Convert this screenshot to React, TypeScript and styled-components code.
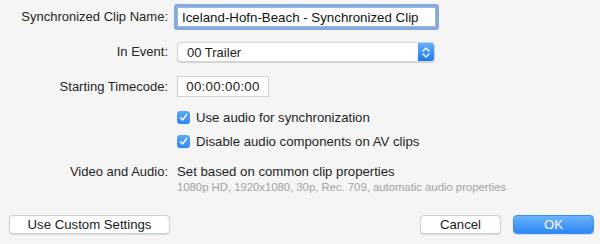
import React from 'react';
import styled, { createGlobalStyle } from 'styled-components';

const GlobalStyle = createGlobalStyle`
  html, body {
    margin: 0;
    padding: 0;
    background: #f5f5f5;
  }
  body {
    font-family: "Liberation Sans", Arial, sans-serif;
    font-size: 13px;
    color: #222;
    -webkit-font-smoothing: antialiased;
  }
`;

const Sheet = styled.div`
  width: 600px;
  height: 244px;
  box-sizing: border-box;
  padding-top: 7px;
  display: flex;
  flex-direction: column;
  background: #f5f5f5;
`;

const Row = styled.div<{ $top: number; $height: number }>`
  display: grid;
  grid-template-columns: 168px 1fr;
  column-gap: 9px;
  align-items: center;
  margin-top: ${(p) => p.$top}px;
  height: ${(p) => p.$height}px;
`;

const Label = styled.label<{ $top?: boolean }>`
  text-align: right;
  white-space: nowrap;
  color: #262626;
  align-self: ${(p) => (p.$top ? 'start' : 'center')};
  line-height: 16px;
`;

const TextField = styled.div`
  width: 259px;
  height: 20px;
  box-sizing: border-box;
  border: 1px solid #9bb6dc;
  background: #fff;
  box-shadow: 0 0 0 3px #86a9dc;
  border-radius: 1px;
  padding: 0 4px;
  display: flex;
  align-items: center;
  font-size: 13.3px;
  color: #111;
`;

const Popup = styled.div`
  width: 258px;
  height: 20px;
  box-sizing: border-box;
  display: flex;
  background: #fff;
  border: 1px solid #d4d4d4;
  border-radius: 4px;
  box-shadow: 0 0.5px 1px rgba(0, 0, 0, 0.15);
  overflow: hidden;
`;

const PopupValue = styled.div`
  flex: 1;
  display: flex;
  align-items: center;
  padding-left: 9px;
  color: #1a1a1a;
`;

const PopupArrows = styled.div`
  width: 16px;
  display: flex;
  align-items: center;
  justify-content: center;
  background: linear-gradient(#63aefc, #1c79f3);
`;

const Timecode = styled.div`
  width: 92px;
  height: 21px;
  box-sizing: border-box;
  border: 1px solid #d2d2d2;
  background: #fff;
  display: flex;
  align-items: center;
  justify-content: center;
  font-size: 13.3px;
  letter-spacing: 0.3px;
  color: #1a1a1a;
`;

const Check = styled.label`
  display: flex;
  align-items: center;
  gap: 6px;
  white-space: nowrap;
  font-size: 13.2px;
  color: #1f1f1f;
`;

const Box = styled.span`
  width: 13px;
  height: 13px;
  border-radius: 3px;
  background: linear-gradient(#5ea8fb, #2f86f4);
  display: flex;
  align-items: center;
  justify-content: center;
`;

const Info = styled.div`
  display: flex;
  flex-direction: column;
`;

const InfoMain = styled.span`
  font-size: 13.2px;
  color: #1f1f1f;
  line-height: 16px;
`;

const InfoSub = styled.span`
  font-size: 11.3px;
  color: #a3a3a3;
  line-height: 14px;
`;

const Footer = styled.div`
  margin-top: auto;
  margin-bottom: 10px;
  padding: 0 6px 0 9px;
  display: flex;
  align-items: center;
`;

const Spacer = styled.div`
  flex: 1;
`;

const Button = styled.button<{ $primary?: boolean; $width: number }>`
  width: ${(p) => p.$width}px;
  height: 19px;
  box-sizing: border-box;
  padding: 0;
  font-family: inherit;
  font-size: 13.2px;
  border-radius: 4px;
  border: 1px solid ${(p) => (p.$primary ? '#3a8ef5' : '#d0d0d0')};
  background: ${(p) => (p.$primary ? 'linear-gradient(#6cb3fb, #2a88f5)' : '#fff')};
  color: ${(p) => (p.$primary ? '#fff' : '#1a1a1a')};
  box-shadow: 0 0.5px 1px rgba(0, 0, 0, 0.12);
  & + & {
    margin-left: 12px;
  }
`;

const Chevrons = () => (
  <svg width="8" height="13" viewBox="0 0 8 13">
    <path d="M1 5 L4 2 L7 5" fill="none" stroke="#fff" strokeWidth="1.4" strokeLinecap="round" strokeLinejoin="round" />
    <path d="M1 8 L4 11 L7 8" fill="none" stroke="#fff" strokeWidth="1.4" strokeLinecap="round" strokeLinejoin="round" />
  </svg>
);

const Tick = () => (
  <svg width="9" height="9" viewBox="0 0 9 9">
    <path d="M1.5 4.8 L3.6 7 L7.6 1.6" fill="none" stroke="#fff" strokeWidth="1.5" strokeLinecap="round" strokeLinejoin="round" />
  </svg>
);

export default function App() {
  return (
    <>
      <GlobalStyle />
      <Sheet>
        <Row $top={0} $height={20}>
          <Label>Synchronized Clip Name:</Label>
          <TextField>Iceland-Hofn-Beach - Synchronized Clip</TextField>
        </Row>
        <Row $top={15} $height={20}>
          <Label>In Event:</Label>
          <Popup>
            <PopupValue>00 Trailer</PopupValue>
            <PopupArrows>
              <Chevrons />
            </PopupArrows>
          </Popup>
        </Row>
        <Row $top={14} $height={21}>
          <Label>Starting Timecode:</Label>
          <Timecode>00:00:00:00</Timecode>
        </Row>
        <Row $top={12} $height={16}>
          <span />
          <Check>
            <Box>
              <Tick />
            </Box>
            Use audio for synchronization
          </Check>
        </Row>
        <Row $top={8} $height={16}>
          <span />
          <Check>
            <Box>
              <Tick />
            </Box>
            Disable audio components on AV clips
          </Check>
        </Row>
        <Row $top={15} $height={30}>
          <Label $top>Video and Audio:</Label>
          <Info>
            <InfoMain>Set based on common clip properties</InfoMain>
            <InfoSub>1080p HD, 1920x1080, 30p, Rec. 709, automatic audio properties</InfoSub>
          </Info>
        </Row>
        <Footer>
          <Button $width={161}>Use Custom Settings</Button>
          <Spacer />
          <Button $width={81}>Cancel</Button>
          <Button $width={81} $primary>
            OK
          </Button>
        </Footer>
      </Sheet>
    </>
  );
}
